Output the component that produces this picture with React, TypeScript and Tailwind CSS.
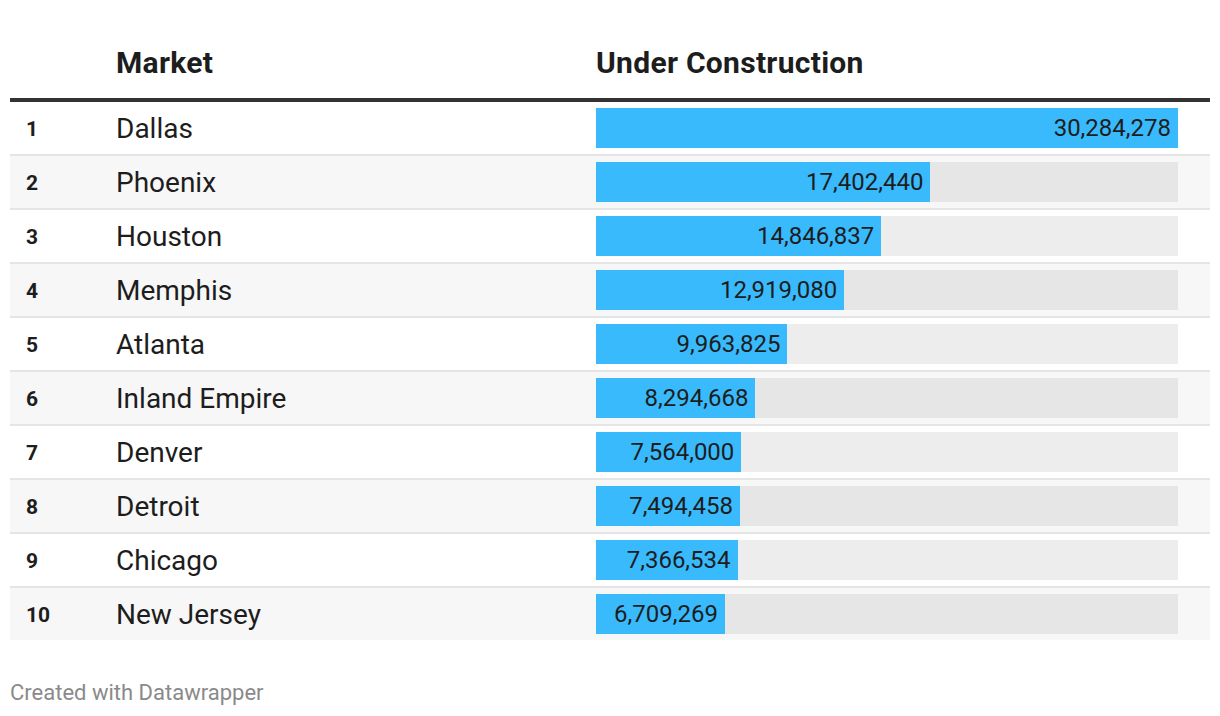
const rows = [
  { market: "Dallas", value: 30284278 },
  { market: "Phoenix", value: 17402440 },
  { market: "Houston", value: 14846837 },
  { market: "Memphis", value: 12919080 },
  { market: "Atlanta", value: 9963825 },
  { market: "Inland Empire", value: 8294668 },
  { market: "Denver", value: 7564000 },
  { market: "Detroit", value: 7494458 },
  { market: "Chicago", value: 7366534 },
  { market: "New Jersey", value: 6709269 },
];

const max = 30284278;

export default function App() {
  return (
    <div className="h-[716px] w-[1220px] bg-white px-[10px] pt-[47px] font-['Roboto',sans-serif] text-[#1d1d1d]">
      <div className="flex h-[55px] items-center border-b-4 border-[#333333] pb-[20px] tracking-[0.3px]">
        <div className="w-[106px]" />
        <div className="w-[480px] text-[30px] font-bold">Market</div>
        <div className="text-[30px] font-bold">Under Construction</div>
      </div>
      {rows.map((row, i) => (
        <div
          key={row.market}
          className={`flex items-center ${i % 2 ? "bg-[#f7f7f7]" : "bg-white"} ${
            i < rows.length - 1 ? "h-[54px] border-b-2 border-[#e5e5e5]" : "h-[52px]"
          }`}
        >
          <div className="w-[106px] pl-[16px] pt-[3px] text-[21px] font-bold">{i + 1}</div>
          <div className="w-[480px] pt-[1px] text-[28px]">{row.market}</div>
          <div className={`h-[40px] w-[582px] ${i % 2 ? "bg-[#e6e6e6]" : "bg-[#ededed]"}`}>
            <div
              className="flex h-full items-center justify-end bg-[#38bafc] pr-[7px] text-[24px] leading-none"
              style={{ width: `${(row.value / max) * 100}%` }}
            >
              {row.value.toLocaleString("en-US")}
            </div>
          </div>
        </div>
      ))}
      <div className="pt-[36px] text-[22px] text-[#8a8a8a]">Created with Datawrapper</div>
    </div>
  );
}
